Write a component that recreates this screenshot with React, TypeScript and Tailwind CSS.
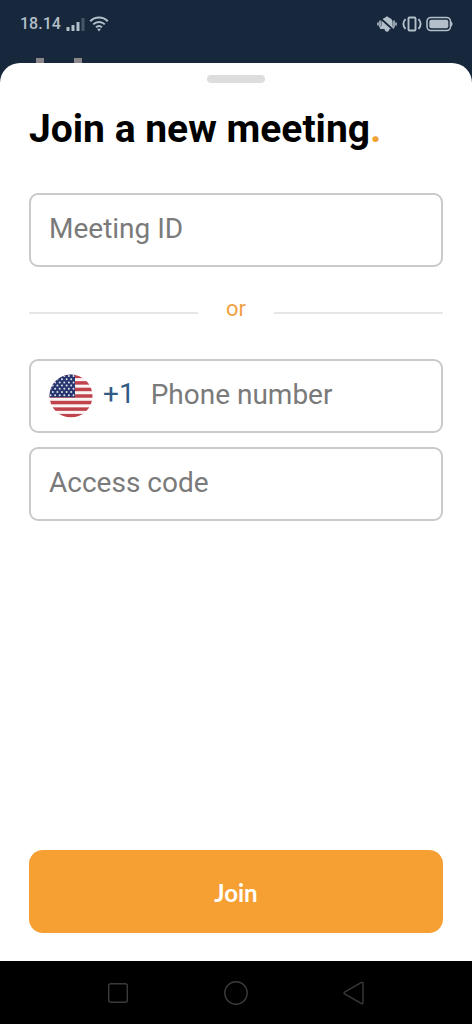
import type { InputHTMLAttributes, ReactNode } from "react";

const StatusBar = () => {
    return (
        <div className="relative h-16 pt-3 px-[18px] flex justify-between overflow-hidden text-[#b3bfc9]">
            <div className="flex items-center h-6 pl-0.5">
                <span className="font-['Roboto',sans-serif] font-medium text-base leading-6">18.14</span>
                <svg className="ml-1 w-5 h-4" viewBox="0 0 20 16" fill="currentColor" aria-hidden="true">
                    <rect x="1.500" y="11" width="3" height="4" rx="0.5" />
                    <rect x="6.500" y="9" width="3" height="6" rx="0.5" />
                    <rect x="11.500" y="6" width="3" height="9" rx="0.5" />
                    <rect x="16.500" y="2" width="3" height="13" rx="0.5" opacity="0.3" />
                </svg>
                <svg className="ml-1 w-5 h-4" viewBox="0 0 20 16" fill="none" stroke="currentColor" strokeWidth="2" aria-hidden="true">
                    <path d="M1.200 5.200C6.200.2 13.800.2 18.800 5.200" />
                    <path d="M4.200 8.400C7.600 5.100 12.400 5.100 15.800 8.400" />
                    <path d="M7 11.300C8.800 9.700 11.200 9.700 13 11.300" />
                    <path d="M8 12.800h4l-2 2.700z" fill="currentColor" stroke="none" />
                </svg>
            </div>
            <div className="flex items-center h-6 gap-1">
                <svg className="w-5 h-4" viewBox="0 0 20 16" aria-hidden="true">
                    <path
                        d="M10 .5c.8 0 1.400.4 1.600 1.100 2.600.6 4 2.300 4 4.900v3.600l1.400 2v.9H3v-.9l1.400-2V6.500c0-2.600 1.400-4.300 4-4.900C8.600.9 9.200.5 10 .5zM7.500 13h5c-.3 1.900-1.200 2.700-2.500 2.700s-2.200-.8-2.500-2.700z"
                        fill="currentColor"
                    />
                    <path d="M3 4.500v7M1 6.500v3M17 4.500v7M19 6.500v3" stroke="currentColor" strokeWidth="1.600" />
                    <path d="M2.500 1.500l14.500 13" stroke="#17283d" strokeWidth="1.700" />
                </svg>
                <svg className="ml-px w-5 h-4" viewBox="0 0 20 16" fill="none" stroke="currentColor" strokeWidth="1.900" aria-hidden="true">
                    <rect x="6.500" y="1.500" width="7" height="13" rx="1" />
                    <path d="M3.500 3C1 6 1 10 3.500 13M16.500 3c2.500 3 2.500 7 0 10" />
                </svg>
                <svg className="w-7 h-4" viewBox="0 0 28 16" fill="none" aria-hidden="true">
                    <rect x="1" y="1.500" width="23.500" height="13" rx="4" stroke="currentColor" strokeWidth="1.600" />
                    <rect x="3.300" y="3.700" width="19" height="8.600" rx="2" fill="currentColor" />
                    <path d="M25 5.500c2 .8 2 4.200 0 5z" fill="currentColor" />
                </svg>
            </div>
            {/* top of the page heading behind the sheet */}
            <span className="absolute left-9 top-[58px] h-2 w-2 bg-[#8b8788]" />
            <span className="absolute left-[74px] top-[58px] h-2 w-2 bg-[#8b8788]" />
        </div>
    );
};

const UsFlag = () => {
    const stars = [];
    for (let row = 0; row < 7; row++) {
        for (let col = 0; col < 6; col++) {
            stars.push(
                <circle key={`${row}-${col}`} cx={1.5 + col * 4.6 + (row % 2) * 2.3} cy={2 + row * 3.2} r="1" fill="#dfe4f0" />
            );
        }
    }
    return (
        <svg className="w-11 h-11 shrink-0" viewBox="0 0 44 44" role="img" aria-label="United States">
            <clipPath id="flag-round">
                <circle cx="22" cy="22" r="21.500" />
            </clipPath>
            <g clipPath="url(#flag-round)">
                <rect width="44" height="44" fill="#faf4f4" />
                {[0, 1, 2, 3, 4, 5, 6].map((i) => (
                    <rect key={i} y={0.6 + i * 6.55} width="44" height="3.5" fill="#bf434c" />
                ))}
                <svg width="26" height="23.500">
                    <rect width="26" height="23.500" fill="#26356d" />
                    {stars}
                </svg>
            </g>
        </svg>
    );
};

type FieldProps = InputHTMLAttributes<HTMLInputElement> & { before?: ReactNode };

const Field = ({ before, ...input }: FieldProps) => {
    return (
        <div className="flex items-center h-[74px] px-[18px] border-2 border-[#cacaca] rounded-[9px]">
            {before}
            <input
                {...input}
                className="min-w-0 flex-1 h-full pb-1 bg-transparent outline-none font-['Roboto',sans-serif] text-[28px] leading-8 text-[#333333] placeholder:text-[#7a7a7a]"
            />
        </div>
    );
};

const NavBar = () => {
    return (
        <nav className="h-[63px] bg-black flex items-center justify-center gap-[94px] text-[#3a3a3a]">
            <button type="button" aria-label="Recent apps">
                <svg className="w-6 h-6" viewBox="0 0 24 24" fill="none" stroke="currentColor" strokeWidth="1.400">
                    <rect x="2.700" y="2.700" width="18.600" height="18.600" rx="2" />
                </svg>
            </button>
            <button type="button" aria-label="Home">
                <svg className="w-6 h-6" viewBox="0 0 24 24" fill="none" stroke="currentColor" strokeWidth="1.400">
                    <circle cx="12" cy="12" r="11.200" />
                </svg>
            </button>
            <button type="button" aria-label="Back">
                <svg className="w-6 h-6" viewBox="0 0 24 24" fill="none" stroke="currentColor" strokeWidth="1.400" strokeLinejoin="round">
                    <path d="M2.600 11.200 19.500 1.400c.8-.4 1.500 0 1.500.9v19.400c0 .9-.7 1.300-1.500.9L2.600 12.800c-.7-.4-.7-1.200 0-1.600z" />
                </svg>
            </button>
        </nav>
    );
};

const App = () => {
    return (
        <div className="min-h-screen flex flex-col bg-[#17283d]">
            <StatusBar />
            <main className="-mt-px relative flex-1 flex flex-col bg-white rounded-t-[20px] px-[29px] pb-7">
                <div className="mt-3 h-2 w-[58px] self-center rounded-full bg-[#dddddd]" />
                <h1 className="mt-[22px] font-['Roboto',sans-serif] font-bold text-[39px] leading-[48px] text-black whitespace-nowrap">
                    Join a new meeting<span className="text-[#f2a233]">.</span>
                </h1>
                <form className="mt-10 flex-1 flex flex-col" onSubmit={(e) => e.preventDefault()}>
                    <Field placeholder="Meeting ID" aria-label="Meeting ID" />
                    <div className="h-[92px] flex items-center gap-7">
                        <span className="flex-1 h-0.5 bg-[#e6e6e6]" />
                        <span className="pb-2 font-['Roboto',sans-serif] text-[22px] leading-7 text-[#f2a140]">or</span>
                        <span className="flex-1 h-0.5 bg-[#e6e6e6]" />
                    </div>
                    <Field
                        type="tel"
                        placeholder="Phone number"
                        aria-label="Phone number"
                        before={
                            <button type="button" className="mr-4 flex items-center gap-2.5">
                                <UsFlag />
                                <span className="pb-1 font-['Roboto',sans-serif] text-[28px] leading-8 text-[#315b85]">+1</span>
                            </button>
                        }
                    />
                    <div className="h-3.5" />
                    <Field placeholder="Access code" aria-label="Access code" />
                    <button
                        type="submit"
                        className="mt-auto h-[83px] pt-0.5 rounded-[14px] bg-[#f69f33] font-['Lato',sans-serif] font-bold text-2xl text-white"
                    >
                        Join
                    </button>
                </form>
            </main>
            <NavBar />
        </div>
    );
};

export default App;
